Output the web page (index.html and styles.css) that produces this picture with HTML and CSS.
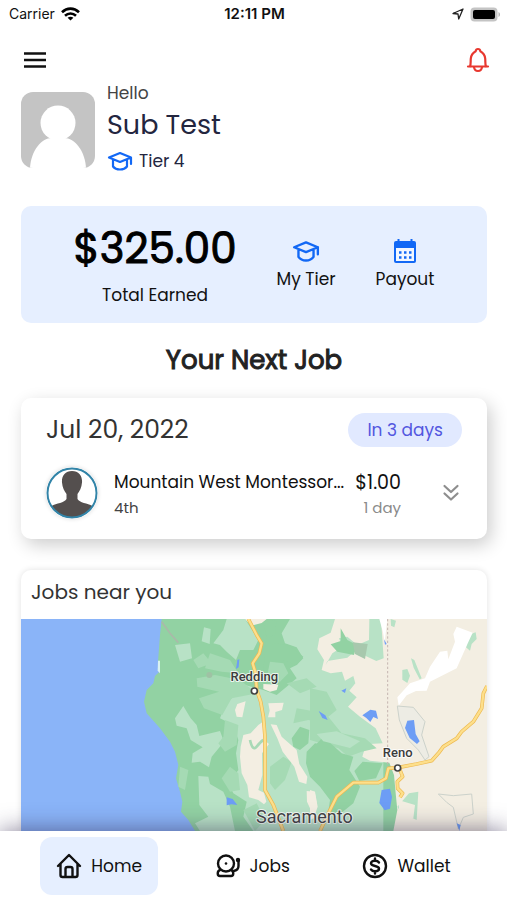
FILE: index.html
```html
<!DOCTYPE html>
<html lang="en">
<head>
    <meta charset="UTF-8">
    <meta name="viewport" content="width=device-width, initial-scale=1.0">
    <title>Home</title>
    <link rel="stylesheet" href="styles.css">
</head>
<body>
    <div class="status-bar">
        <div class="carrier">
            <span>Carrier</span>
            <svg width="19" height="14" viewBox="0 0 19 14" fill="none" stroke="#000" stroke-width="2.600">
                <path d="M1 5.200C6 .4 13 .4 18 5.200"/>
                <path d="M4 8.700c3.200-3 7.800-3 11 0"/>
                <path d="M6.600 10.700L9.500 13.600l2.900-2.900c-1.600-1.300-4.200-1.300-5.800 0z" fill="#000" stroke="none"/>
            </svg>
        </div>
        <div class="clock">12:11 PM</div>
        <div class="indicators">
            <svg width="12" height="12" viewBox="0 0 12 12" fill="none" stroke="#222" stroke-width="1.300" stroke-linejoin="round">
                <path d="M1 5.500L11 1 6.700 11 6 6z"/>
            </svg>
            <svg width="30" height="15" viewBox="0 0 30 15">
                <rect x=".5" y=".5" width="27" height="14" rx="4" fill="#c4c4c4"/>
                <rect x="3" y="3" width="22" height="9" rx="2" fill="#000"/>
                <path d="M28.500 5v5c2-1 2-4 0-5z" fill="#b5b5b5"/>
            </svg>
        </div>
    </div>

    <header class="top-bar">
        <button class="icon-button" aria-label="Menu">
            <svg width="24" height="18" viewBox="0 0 24 18" stroke="#111" stroke-width="2.400">
                <path d="M1 2.500h22M1 9h22M1 15.500h22"/>
            </svg>
        </button>
        <button class="icon-button" aria-label="Notifications">
            <svg width="24" height="26" viewBox="0 0 24 26" fill="none" stroke="#e8382f" stroke-width="2.200" stroke-linecap="round" stroke-linejoin="round">
                <path d="M2 19.500h20M4 19.500c1-2 .5-5 .8-8 .3-3.600 2.200-5.700 4.800-7.300C9.800 3 10.700 2 12 2s2.200 1 2.400 2.200c2.600 1.600 4.500 3.700 4.800 7.300.3 3-.2 6 .8 8"/>
                <path d="M8 20c.3 2.700 1.800 4 4 4s3.700-1.300 4-4"/>
            </svg>
        </button>
    </header>

    <main class="content">
        <section class="profile">
            <svg class="profile-photo" width="74" height="76" viewBox="0 0 74 76">
                <rect width="74" height="76" fill="#c4c4c4"/>
                <circle cx="37" cy="31" r="17.500" fill="#fff"/>
                <path d="M9 76c1-17 11-30 22-30h12c11 0 21 13 22 30z" fill="#fff"/>
            </svg>
            <div class="profile-text">
                <div class="hello">Hello</div>
                <h1 class="name">Sub Test</h1>
                <div class="tier">
                    <svg width="26" height="20" viewBox="0 0 26 20" fill="none" stroke="#1268f5" stroke-width="2.200" stroke-linejoin="round" stroke-linecap="round">
                        <path d="M13 2L2 6.500 13 11l11-4.500zM6 8.500v7c3 4 11 4 14 0v-7M24 6.500V13"/>
                    </svg>
                    <span>Tier 4</span>
                </div>
            </div>
        </section>

        <section class="earnings">
            <div class="total">
                <div class="amount">$325.00</div>
                <div class="total-label">Total Earned</div>
            </div>
            <button class="shortcut">
                <svg width="28" height="26" viewBox="0 0 26 24" fill="none" stroke="#1268f5" stroke-width="2.200" stroke-linejoin="round" stroke-linecap="round">
                    <path d="M13 4L2 8.500 13 13l11-4.500zM6 10.500v7c3 4.500 11 4.500 14 0v-7M24 8.500V15"/>
                </svg>
                My Tier
            </button>
            <button class="shortcut">
                <svg width="28" height="26" viewBox="0 0 28 26">
                    <path d="M5 3h18a2 2 0 0 1 2 2v18a2 2 0 0 1-2 2H5a2 2 0 0 1-2-2V5a2 2 0 0 1 2-2z" fill="#1268f5"/>
                    <path d="M7.500 1v4M20.500 1v4" stroke="#1268f5" stroke-width="2"/>
                    <path d="M5 10h18v13H5z" fill="#f2f7ff"/>
                    <path d="M8 14.500h12.500M8 19.500h12.500" stroke="#1268f5" stroke-width="2.500" stroke-dasharray="2.500"/>
                </svg>
                Payout
            </button>
        </section>

        <h2 class="section-title">Your Next Job</h2>

        <section class="job-card">
            <div class="job-head">
                <div class="job-date">Jul 20, 2022</div>
                <div class="badge">In 3 days</div>
            </div>
            <div class="job-row">
                <svg class="job-logo" width="52" height="52" viewBox="0 0 52 52">
                    <circle cx="26" cy="26" r="24" fill="#fff"/>
                    <path d="M26 4c7 0 10.500 5 10 11.500-.3 5-2.500 9-4.500 11.500v5c2 4 10 4 15 7a24 24 0 0 1-41 0c5-3 13-3 15-7v-5c-2-2.500-4.200-6.500-4.500-11.500C15.500 9 19 4 26 4z" fill="#544f4e"/>
                    <circle cx="26" cy="26" r="24.500" fill="none" stroke="#3284a8" stroke-width="2"/>
                </svg>
                <div class="job-info">
                    <div class="job-name">Mountain West Montessor...</div>
                    <div class="job-grade">4th</div>
                </div>
                <div class="job-pay">
                    <div class="pay">$1.00</div>
                    <div class="days">1 day</div>
                </div>
                <button class="icon-button expand" aria-label="Show details">
                    <svg width="18" height="18" viewBox="0 0 18 18" fill="none" stroke="#8e8e8e" stroke-width="2.200" stroke-linecap="round" stroke-linejoin="round">
                        <path d="M2.500 2L9 8l6.500-6M2.500 9.500l6.500 6 6.500-6"/>
                    </svg>
                </button>
            </div>
        </section>

        <section class="map-card">
            <h3 class="map-title">Jobs near you</h3>
            <svg class="map" viewBox="63 1857 1398 636" preserveAspectRatio="xMidYMin slice">
                <!-- ocean and forest -->
                <path class="water" d="M0 1800h1500v800H0z"/>
                <path class="forest" d="M485 1857L480 1905 474 1985 478 2015 465 2028 460 2050 440 2070 432 2105 440 2140 480 2185 510 2225 525 2255 535 2295 528 2335 540 2375 547 2405 543 2435 565 2460 585 2493H1470V1857z"/>
                <path d="M474 1982h6v38l-7-8z" fill="#d9f2f0"/>

                <!-- west side -->
                <g transform="translate(390 1830)">
                    <path class="meadow" d="M480 27L455 70 465 100 500 112 520 145 500 165 480 175 500 205 470 230 440 255 400 240 345 225 320 250 285 285 270 325 310 345 325 390 318 430 325 480 295 520 310 550 350 575 340 620 370 663H760V27z"/>
                    <path class="meadow" d="M290 27L345 27 385 90 370 120 330 120 318 150 290 125 270 105 250 100 280 60zM135 105L180 100 186 145 150 155zM222 52l20 5-3 45-24-8zM160 288L182 325 200 345 208 378 270 363 282 395 245 440 237 472 210 455 185 458 188 430 218 412 182 390 170 355 140 347 135 325zM205 498L235 500 240 522 280 545 300 590 315 663H210L195 640 235 620 208 585z"/>
                    <path class="grove" d="M200 205l55-10 75 15 50 40-75 15-28 50-55-20-15-30 60-20-65-15zM240 130l60 20 25 40-50-5-50-10zM190 150l30-20 25 30-40 15zM285 330l40 15-5 60-35 20-20-25 15-20zM300 470l25 20 5 50-30 5-25-40zM150 470l25 10-10 60-20-10z"/>
                    <path class="forest" d="M485 385l25-35 28 10-3 40-25 20-20-10zM530 425l25-25 30 5 10 60-5 60-50-25-12-40zM430 100l45 5 45 35-20 25-40-15-20 40-40-10 5-50zM400 35l40-5-5 45-25 10z"/>
                    <path class="grove" d="M420 470l40-30 25 15-20 55-30 30-15-20zM420 155l40 5 15 30-25 25-40-10zM470 220l60-15 30 25-50 20zM500 295l60 10 20 35-45-10-45 10zM340 600l40-20 25 50-30 33z"/>
                    <path class="sand" d="M345 27h65l-15 12-32 8zM400 222l45 2-5 16-20 5-20-8zM415 280l46-2-5 22-20 6v16h-22l5-20zM322 282l25-8-10 48-17-2-5-20zM398 336L385 345 362 370 340 375 332 410 330 440 335 490 352 525 357 562 385 570 402 583 409 575 402 548 385 540 397 495 396 430 417 402 402 390zM422 343l18 2 15 35 45 40 8 42 24 38-3 22-22-7-14-45-35-45-16-40zM530 543l24 2 7 40-14 25-16-35z"/>
                    <path d="M360 390q8 35 20 20t20-20" fill="none" stroke="#a9d9b6" stroke-width="8"/>
                    <path class="lake" d="M290 562l18 5 14 18-18-2-14 3zM322 150l6-2-2 24-8 5z"/>
                    <path d="M95 35l25 35 25 28" fill="none" stroke="#aab9a9" stroke-width="5"/>
                    <circle cx="238" cy="195" r="9" fill="#9fc2a4"/>
                </g>

                <!-- east side -->
                <g transform="translate(930 1830)">
                    <path class="sand" d="M75 27L62 68 28 85 22 118 42 150 35 180 62 190 96 185 105 212 130 198 136 220 118 242 140 262 114 290 150 320 197 355 218 400 168 403 157 440 180 452 238 458 252 495 258 560 262 600 250 663H560V27z"/>
                    <path class="meadow" d="M178 27h35l8 118-22 8-32-15-25-20-30 25-60 10-5 12 20-35 30-20-10-25 25-5 30 25 35-15zM242 27l16 5-5 20-10-5zM277 180l15-3 8 20-8 22-15-10zM303 145l10 5 22 55-6 3-18-35zM475 75l22-8 3 20-15 15-5 20-12-10zM262 590l35-40 28-5-5 85-45-20z"/>
                    <path class="forest" d="M92 55l20 35 28 15-8 30-50-10-20-22 30-10z"/>
                    <path d="M128 97l45 5-8 45-30-15z" fill="#a7c8ad"/>
                    <path d="M208 27h24l-8 70-5-30z" fill="#fff"/>
                    <path class="grove" d="M0 235l50 10 30 55-25 20 40 50 70 15 35 30-45 10-40 15-30-25-85-25z"/>
                    <path class="forest" d="M0 422L40 380 95 430 130 440 118 480 150 530 130 580 90 612 55 605 60 570 30 530 0 500zM158 455l60 5-20 45-50 8-15-30z"/>
                    <path class="meadow" d="M20 372l60-8 70 30-30 20-80-20z"/>
                    <path class="sand" d="M0 540l15 5 8 45-12 35-11 5zM265 570l50 15-5 40-40 10z"/>
                    <path d="M440 50L488 68 474 98 450 152 440 175 360 215 350 242 318 243 290 256 266 287 262 262 300 220 345 205 360 170 390 125 412 122 415 148 435 95 430 72z" fill="#fff"/>
                    <path class="outline" d="M262 288l48 4 35 43-10 40 22 65-12 10-20-30-35-35-22-55z"/>
                    <path class="outline" fill-opacity="0" d="M385 552l45 5 55-5 5 60-30 10-15 35-15-65-20-15z"/>
                    <path class="lake" d="M292 332l20-2 5 42 12 22-8 8-22-18-14-30zM215 540l25-4 6 25-6 35-16 5-16-22zM157 316l24-17 17 3 6 25-14-6-9 15-12-12zM26 303l20 13 7 14-16-6zM94 242l15-7-4 14zM222 88l8 14-5 2zM440 640l12 5-4 18z"/>
                    <path d="M233 27v455" fill="none" stroke="#c5b5b0" stroke-width="3" stroke-dasharray="7 6"/>
                </g>

                <!-- highways -->
                <g class="road-edge">
                    <path id="i5" d="M745 1857L770 1905 785 1930 778 1960 758 1990 767 2020 770 2070 782 2105 790 2150 795 2210V2370L820 2415 850 2493"/>
                    <path id="i80" d="M1461 2058L1450 2080 1445 2125 1420 2165 1385 2195 1370 2215 1330 2240 1315 2260 1295 2282 1250 2292 1193 2303 1165 2305 1158 2335 1135 2348 1060 2348 1010 2390 995 2420 960 2493"/>
                    <path id="us395" d="M1198 2305l10 25-16 15 1 20 15 15-8 12"/>
                </g>
                <g class="road">
                    <use href="#i5"/>
                    <use href="#i80"/>
                    <use href="#us395"/>
                </g>

                <g class="town">
                    <circle cx="763" cy="2073" r="9"/>
                    <circle cx="1193" cy="2304" r="9"/>
                </g>
                <g class="map-label">
                    <text x="763" y="2043">Redding</text>
                    <text x="1193" y="2272">Reno</text>
                    <text class="city" x="913" y="2470">Sacramento</text>
                </g>
            </svg>
        </section>
    </main>

    <nav class="tab-bar">
        <a class="tab active" href="#home">
            <svg width="26" height="26" viewBox="0 0 26 26" fill="none" stroke="#111" stroke-width="2.400" stroke-linecap="round" stroke-linejoin="round">
                <path d="M2 13L13 2l11 11M4.500 11v11q0 2 2 2h13q2 0 2-2V11M9.500 24v-8q0-2 2-2h3q2 0 2 2v8"/>
            </svg>
            Home
        </a>
        <a class="tab" href="#jobs">
            <svg width="26" height="26" viewBox="0 0 26 26" fill="none" stroke="#111" stroke-width="2.400" stroke-linecap="round" stroke-linejoin="round">
                <circle cx="11" cy="10.500" r="8"/>
                <circle cx="11" cy="10.500" r="1.300" fill="#111" stroke="none"/>
                <path d="M5 17c-3 1-3 6 0 6h11c3 0 3-5 0-6"/>
                <circle cx="23" cy="7" r="1"/>
                <path d="M23.500 8v5c0 3-2 4.500-5 5"/>
            </svg>
            Jobs
        </a>
        <a class="tab" href="#wallet">
            <svg width="26" height="26" viewBox="0 0 26 26" fill="none" stroke="#111" stroke-width="2.400" stroke-linecap="round" stroke-linejoin="round">
                <circle cx="13" cy="13" r="11"/>
                <path d="M17 9.500C16 8 14.500 7.700 13 7.700c-2.500 0-4 1-4 2.600 0 3.700 8 1.700 8 5.400 0 1.600-1.500 2.600-4 2.600-1.500 0-3-.3-4-1.800M13 5.500v2M13 18.500v2"/>
            </svg>
            Wallet
        </a>
    </nav>
</body>
</html>
```

FILE: styles.css
```css
* {
    box-sizing: border-box;
}
body {
    margin: 0;
    height: 100vh;
    display: flex;
    flex-direction: column;
    overflow: hidden;
    background: #fff;
    color: #111;
    font-family: Poppins, Inter, "Noto Sans", sans-serif;
    font-size: 17px;
    line-height: 24px;
}
h1, h2, h3 {
    margin: 0;
    font-weight: 400;
}
svg {
    display: block;
    flex-shrink: 0;
}
button {
    border: 0;
    padding: 0;
    background: none;
    color: inherit;
    font: inherit;
    cursor: pointer;
}

/* status bar */
.status-bar {
    display: grid;
    grid-template-columns: 1fr auto 1fr;
    align-items: center;
    height: 28px;
    padding: 0 7px 0 9px;
    font-family: Inter, sans-serif;
    font-size: 14px;
}
.carrier {
    display: flex;
    align-items: center;
    gap: 6px;
}
.clock {
    font-size: 15px;
    font-weight: 600;
}
.indicators {
    display: flex;
    justify-content: flex-end;
    align-items: center;
    gap: 6px;
}

/* header */
.top-bar {
    display: flex;
    justify-content: space-between;
    align-items: center;
    height: 64px;
    padding: 0 17px 0 23px;
}
.content {
    flex: 1;
    min-height: 0;
    display: flex;
    flex-direction: column;
    padding: 0 20px 0 21px;
}
.profile {
    display: flex;
    align-items: center;
    gap: 12px;
    height: 76px;
}
.profile-photo {
    border-radius: 12px;
}
.profile-text {
    padding-bottom: 2px;
    color: #23263f;
}
.hello {
    color: #444;
}
.name {
    font-size: 27px;
    line-height: 40px;
}
.tier {
    display: flex;
    align-items: center;
    gap: 6px;
    line-height: 32px;
}

/* earnings */
.earnings {
    display: flex;
    justify-content: center;
    align-items: center;
    gap: 40px;
    flex-shrink: 0;
    height: 117px;
    margin-top: 38px;
    background: #e6efff;
    border-radius: 10px;
}
.total {
    text-align: center;
}
.amount {
    font-size: 42px;
    line-height: 60px;
    color: #000;
    -webkit-text-stroke: 1px #000;
}
.total-label {
    line-height: 32px;
}
.shortcut {
    display: flex;
    flex-direction: column;
    align-items: center;
    gap: 3px;
}

.section-title {
    margin: 17px 0 18px;
    font-size: 26px;
    line-height: 40px;
    text-align: center;
    color: #222;
    -webkit-text-stroke: 1px #222;
}

/* next job */
.job-card {
    flex-shrink: 0;
    padding: 15px 25px 20px;
    background: #fff;
    border-radius: 10px;
    box-shadow: 4px 6px 18px rgba(0, 0, 0, 0.2);
}
.job-head {
    display: flex;
    justify-content: space-between;
    align-items: center;
}
.job-date {
    font-size: 25px;
    color: #333;
}
.badge {
    padding: 5px 19px;
    border-radius: 17px;
    background: #e1e9ff;
    color: #5357e0;
}
.job-row {
    display: flex;
    align-items: center;
    height: 52px;
    margin-top: 20px;
    line-height: 25px;
}
.job-logo {
    border-radius: 50%;
    box-shadow: 0 0 4px rgba(0, 0, 0, 0.15);
}
.job-info, .job-pay {
    padding-top: 3px;
}
.job-info {
    flex: 1;
    min-width: 0;
    margin-left: 16px;
}
.job-name {
    white-space: nowrap;
}
.job-grade {
    font-size: 15px;
    color: #444;
}
.job-pay {
    margin-right: 41px;
    text-align: right;
}
.pay {
    font-size: 19px;
}
.days {
    font-size: 15px;
    color: #8a8a8a;
}
.expand {
    margin-right: 2px;
}

/* map */
.map-card {
    flex: 1;
    min-height: 0;
    display: flex;
    flex-direction: column;
    margin-top: 31px;
    border-radius: 10px 10px 0 0;
    overflow: hidden;
    box-shadow: 0 0 6px rgba(0, 0, 0, 0.12);
}
.map-title {
    padding: 8px 10px 12px;
    font-size: 20px;
    line-height: 29px;
    color: #333;
}
.map {
    width: 100%;
    flex: 1;
    min-height: 0;
}
.water {
    fill: #8ab4f8;
}
.forest {
    fill: #92d2a3;
}
.grove {
    fill: #a5dab4;
}
.meadow {
    fill: #b8e2c6;
}
.sand {
    fill: #f3eee2;
}
.lake {
    fill: #6d9df5;
}
.outline {
    fill: #edece4;
    stroke: #ccd2cb;
    stroke-width: 3;
}
.road-edge, .road {
    fill: none;
    stroke: #edb951;
    stroke-width: 11;
    stroke-linejoin: round;
}
.road {
    stroke: #fddf8b;
    stroke-width: 7;
}
.town {
    fill: #fff;
    stroke: #444;
    stroke-width: 5;
}
.map-label {
    font-family: Roboto, sans-serif;
    font-size: 39px;
    font-weight: 500;
    text-anchor: middle;
    fill: #3c3c3c;
    stroke: #fff;
    stroke-opacity: 0.8;
    stroke-width: 6;
    stroke-linejoin: round;
    paint-order: stroke;
}
.city {
    font-size: 54px;
    font-weight: 400;
    fill: #444;
}

/* bottom tabs */
.tab-bar {
    position: relative;
    display: flex;
    justify-content: space-around;
    align-items: center;
    flex-shrink: 0;
    height: 69px;
    padding: 0 20px;
    background: #fff;
    box-shadow: 0 0 24px rgba(45, 35, 75, 0.6);
}
.tab {
    display: flex;
    justify-content: center;
    align-items: center;
    gap: 9px;
    height: 58px;
    padding: 0 16px;
    border-radius: 12px;
    color: #111;
    text-decoration: none;
}
.active {
    background: #e6efff;
}
```
